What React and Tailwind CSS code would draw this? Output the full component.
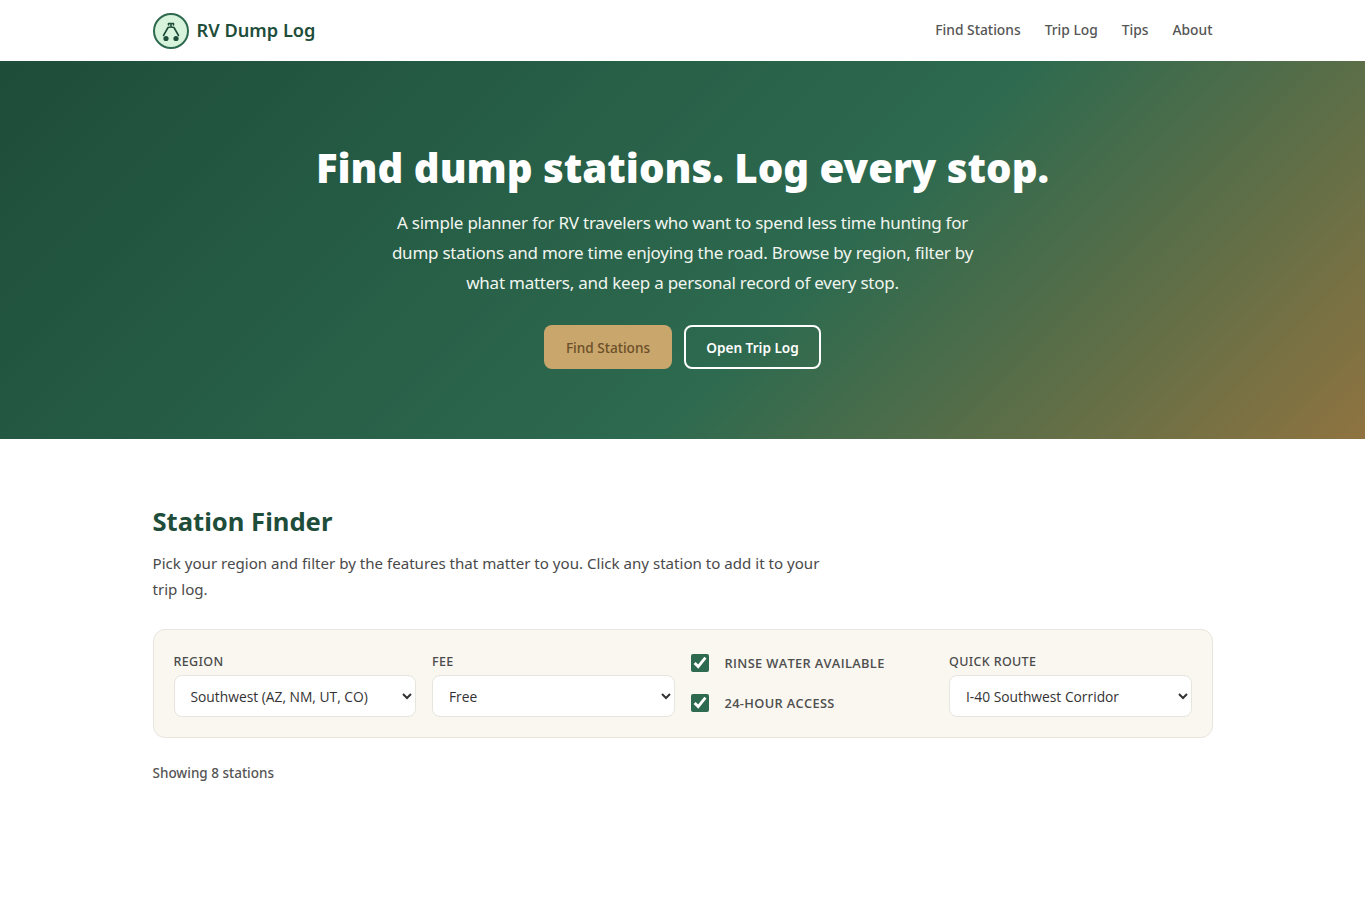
import React from "react";

const font = "font-['Noto_Sans','Open_Sans',sans-serif]";

function Logo() {
  return (
    <svg width="36" height="36" viewBox="0 0 36 36" fill="none" className="shrink-0">
      <circle cx="18" cy="18" r="17" fill="#d8f3dc" stroke="#2d6a4f" strokeWidth="2" />
      <path d="M15.5 12 V10.5 H20.5 V12 M18 10.5 V14 M15 14.5 Q18 13.5 21 14.5 M15 14.5 L10.5 22.5 M21 14.5 L25.5 22.5" stroke="#1e4d3a" strokeWidth="1.6" strokeLinecap="round" strokeLinejoin="round" />
      <circle cx="13" cy="25.5" r="2.6" fill="#1e4d3a" />
      <circle cx="23" cy="25.5" r="2.6" fill="#1e4d3a" />
    </svg>
  );
}

function Field({ label, value, options }) {
  return (
    <label className="flex flex-col">
      <span className="pt-[3px] text-[12.5px] leading-[18px] font-medium tracking-[0.35px] uppercase text-[#4a4a4a] mb-[4px]">{label}</span>
      <select defaultValue={value} className="font-['Open_Sans',sans-serif] h-[42px] w-full pl-3 pr-0.5 bg-white border border-[#e8e5df] rounded-lg text-[13.8px] text-[#333333]">
        {options.map((o) => (
          <option key={o}>{o}</option>
        ))}
      </select>
    </label>
  );
}

function Check({ label }) {
  return (
    <label className="flex items-center gap-4">
      <input type="checkbox" defaultChecked className="size-[18px] accent-[#2d6a4f]" />
      <span className="font-['Open_Sans',sans-serif] text-[12.8px] leading-[18px] font-semibold tracking-[0.35px] uppercase text-[#4f4f4f]">{label}</span>
    </label>
  );
}

export default function App() {
  return (
    <div className={`${font} bg-white min-h-[900px] text-[#333333]`}>
      <header className="h-[61px] bg-white">
        <div className="w-[1060px] mx-auto h-full flex items-center justify-between">
          <a className="flex items-center gap-2">
            <Logo />
            <span className="text-[18.2px] font-semibold text-[#1e4d3a]">RV Dump Log</span>
          </a>
          <nav className="flex gap-6 text-[13.8px] font-medium text-[#555555]">
            <a>Find Stations</a>
            <a>Trip Log</a>
            <a>Tips</a>
            <a>About</a>
          </nav>
        </div>
      </header>

      <section className="h-[378px] bg-[linear-gradient(135deg,#1e4d3a_0%,#2d6a4f_59%,#8f7340_100%)] flex flex-col items-center pt-[79px] text-white text-center">
        <h1 className="text-[40.2px] leading-[56px] font-black mb-[12px]">Find dump stations. Log every stop.</h1>
        <p className="w-[620px] text-[17px] tracking-[-0.24px] leading-[30px] text-[#f1f5ef] mb-[27px]">
          A simple planner for RV travelers who want to spend less time hunting for dump stations and more time enjoying the road. Browse by region, filter by what matters, and keep a personal record of every stop.
        </p>
        <div className="flex gap-3">
          <button className="h-[44px] w-[128px] pt-0.5 rounded-lg bg-[#c9a66b] text-[#6b4f2a] text-[13.6px] font-medium">Find Stations</button>
          <button className="h-[44px] w-[137px] pt-0.5 rounded-lg border-2 border-white text-white text-[13.6px] font-semibold">Open Trip Log</button>
        </div>
      </section>

      <main className="w-[1060px] mx-auto pt-[64px]">
        <h2 className="text-[25.6px] leading-[37px] font-bold text-[#1e4d3a] mb-[10px]">Station Finder</h2>
        <p className="w-[680px] text-[15.1px] leading-[26px] text-[#4a4a4a] mb-[27px]">
          Pick your region and filter by the features that matter to you. Click any station to add it to your trip log.
        </p>
        <div className="grid grid-cols-4 gap-4 items-end bg-[#faf7f1] border border-[#e8e5df] rounded-xl p-5">
          <Field label="Region" value="Southwest (AZ, NM, UT, CO)" options={["Southwest (AZ, NM, UT, CO)"]} />
          <Field label="Fee" value="Free" options={["Free"]} />
          <div className="flex flex-col gap-[22px] pb-[5px]">
            <Check label="Rinse water available" />
            <Check label="24-hour access" />
          </div>
          <Field label="Quick route" value="I-40 Southwest Corridor" options={["I-40 Southwest Corridor"]} />
        </div>
        <p className="mt-[26px] text-[13.5px] leading-[18px] font-medium text-[#555555]">Showing 8 stations</p>
      </main>
    </div>
  );
}
